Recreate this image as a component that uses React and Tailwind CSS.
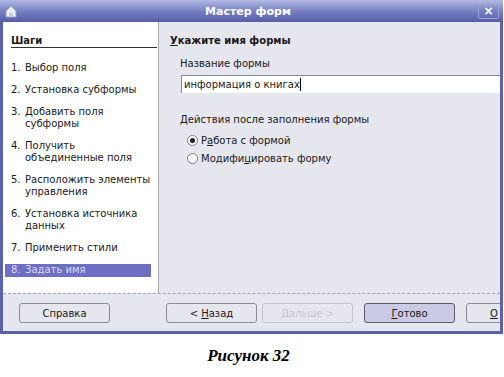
import React from 'react';

const steps = [
  ['1.', 'Выбор поля'],
  ['2.', 'Установка субформы'],
  ['3.', <>Добавить поля<br />субформы</>],
  ['4.', <>Получить<br />объединенные поля</>],
  ['5.', <>Расположить элементы<br />управления</>],
  ['6.', <>Установка источника<br />данных</>],
  ['7.', 'Применить стили'],
];

const Radio = ({ checked, children }) => (
  <div className="flex items-center h-[14px]">
    <span className="w-[11px] h-[11px] rounded-full border border-[#7a7a86] bg-white flex items-center justify-center">
      {checked && <span className="w-[5px] h-[5px] rounded-full bg-[#222]" />}
    </span>
    <span className="ml-[3px]">{children}</span>
  </div>
);

const Button = ({ children, className = '' }) => (
  <div
    className={`shrink-0 w-[91px] h-[20px] rounded-[3px] border flex items-center justify-center ${className}`}
  >
    {children}
  </div>
);

const App = () => {
  return (
    <div className="w-[504px] h-[377px] bg-white font-['DejaVu_Sans',sans-serif] text-[10px] text-[#1a1a1a] overflow-hidden">
      <div className="w-[503px] flex flex-col">
        {/* title bar */}
        <div className="h-[22px] bg-linear-to-b from-[#b4bae4] via-[#7880c2] to-[#565ea8] flex items-center px-[4px]">
          <svg width="14" height="14" viewBox="0 0 14 14" className="shrink-0">
            <path d="M2 7 L7 2 L12 7 L12 13 L2 13 Z" fill="#eef0f8" stroke="#9aa0c8" strokeWidth="1" />
            <rect x="5" y="9" width="4" height="4" fill="#c8cce4" />
          </svg>
          <div className="flex-1 text-center text-white font-bold text-[11px] leading-none">Мастер форм</div>
          <div className="w-[21px] h-[15px] border border-[#9aa2d6] rounded-[2px] flex items-center justify-center text-white font-bold text-[12px] leading-none">
            ×
          </div>
        </div>

        <div className="border-l-[3px] border-r-[3px] border-b-[3px] border-[#5a62aa] flex flex-col">
          {/* body */}
          <div className="h-[271px] flex">
            <div className="w-[156px] bg-white border-r border-[#a8a8b4] pt-[13px]">
              <div className="ml-[8px] mr-[1px] font-bold leading-[12px] border-b border-[#333]">Шаги</div>
              <div className="mt-[14px] ml-[2px] w-[146px] flex flex-col gap-[10px]">
                {steps.map(([n, t]) => (
                  <div key={n} className="flex pl-[6px] leading-[12px] whitespace-nowrap">
                    <span className="w-[14px] shrink-0">{n}</span>
                    <span>{t}</span>
                  </div>
                ))}
                <div className="flex pl-[6px] leading-[12px] h-[13px] bg-[#6c6fc2] text-[#dcdcf4]">
                  <span className="w-[14px] shrink-0">8.</span>
                  <span>Задать имя</span>
                </div>
              </div>
            </div>
            <div className="flex-1 bg-[#e6e6ee] pt-[13px] overflow-hidden">
              <div className="ml-[11px] font-bold leading-[12px]">
                <span className="underline">У</span>кажите имя формы
              </div>
              <div className="ml-[21px] mt-[11px] leading-[12px]">Название формы</div>
              <div className="ml-[22px] mt-[5px] w-[330px] h-[18px] bg-white border-t border-l border-[#8a8a94] flex items-center pl-[2px]">
                информация о книгах<span className="w-px h-[13px] bg-black" />
              </div>
              <div className="ml-[21px] mt-[21px] leading-[12px]">Действия после заполнения формы</div>
              <div className="ml-[28px] mt-[7px] flex flex-col gap-[4px]">
                <Radio checked>
                  Р<span className="underline">а</span>бота с формой
                </Radio>
                <Radio>
                  Модифи<span className="underline">ц</span>ировать форму
                </Radio>
              </div>
            </div>
          </div>

          {/* buttons */}
          <div className="h-[38px] bg-[#e6e6ee] border-t border-dashed border-[#a4a4b0] pt-[9px] pl-[16px] flex overflow-hidden">
            <Button className="border-[#8c8c96]">Справка</Button>
            <Button className="ml-[56px] border-[#8c8c96]">
              &lt; <span className="underline ml-[3px]">Н</span>азад
            </Button>
            <Button className="ml-[5px] border-[#c4c4cc] text-[#c8c8d2]">Дальше &gt;</Button>
            <Button className="ml-[11px] border-[#5c5c66] bg-[#cacae6]">
              <span className="underline">Г</span>отово
            </Button>
            <Button className="ml-[11px] border-[#8c8c96] justify-start pl-[23px]">
              <span className="underline">О</span>
            </Button>
          </div>
        </div>
      </div>

      <div className="mt-[12px] w-[497px] text-center font-['Liberation_Serif',serif] font-bold italic text-[17px] leading-[20px] text-black">
        Рисунок 32
      </div>
    </div>
  );
};

export default App;
